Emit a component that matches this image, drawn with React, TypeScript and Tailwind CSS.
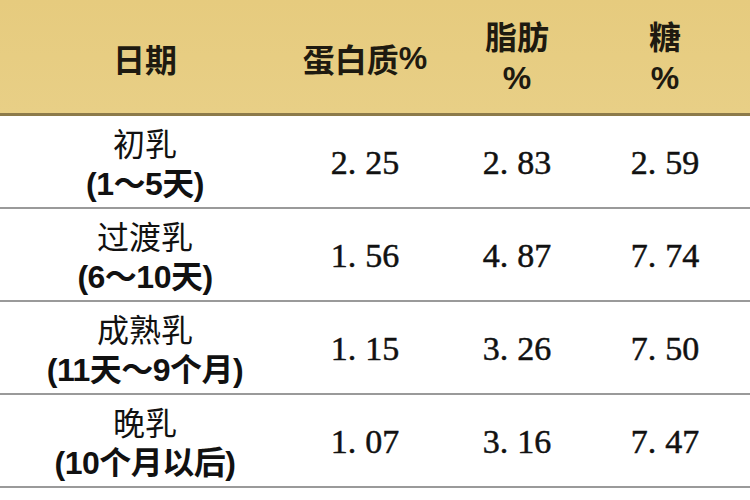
import React from "react";

const rows = [
  { a: "初乳", b: "(1～5天)", v: ["2.25", "2.83", "2.59"] },
  { a: "过渡乳", b: "(6～10天)", v: ["1.56", "4.87", "7.74"] },
  { a: "成熟乳", b: "(11天～9个月)", v: ["1.15", "3.26", "7.50"] },
  { a: "晚乳", b: "(10个月以后)", v: ["1.07", "3.16", "7.47"] },
];

const cjk = { fontFamily: '"Noto Sans CJK SC", "Noto Sans", sans-serif' };
const num = { fontFamily: '"Liberation Serif", serif' };
const bold = { fontFamily: '"Liberation Sans", "Noto Sans CJK SC", sans-serif' };

function Num({ s }: { s: string }) {
  const [i, f] = s.split(".");
  return (
    <span className="text-[34px] text-[#111] leading-none [-webkit-text-stroke:0.5px_#111]" style={num}>
      {i}
      <span className="mr-[9px]">.</span>
      {f}
    </span>
  );
}

function Pct() {
  return <span className="font-bold" style={bold}>%</span>;
}

export default function App() {
  return (
    <div className="w-[750px] h-[500px] bg-white overflow-hidden">
      <div className="grid grid-cols-[290px_150px_154px_142px_14px] h-[116px] bg-gradient-to-b from-[#e6cb7e] to-[#e8cf86] border-b-[3px] border-[#8c7a4a] text-[#1e1a10]" style={cjk}>
        <div className="flex items-center justify-center text-[32px] font-bold pt-[2px]">日期</div>
        <div className="flex items-center justify-center text-[32px] font-bold pt-[2px]">
          <span>蛋白质</span>
          <Pct />
        </div>
        <div className="flex flex-col items-center justify-center text-[32px] font-bold gap-[6px]">
          <span className="leading-[34px]">脂肪</span>
          <span className="leading-[34px]"><Pct /></span>
        </div>
        <div className="flex flex-col items-center justify-center text-[32px] font-bold gap-[6px]">
          <span className="leading-[34px]">糖</span>
          <span className="leading-[34px]"><Pct /></span>
        </div>
        <div />
      </div>
      {rows.map((r, k) => (
        <div key={k} className="grid grid-cols-[290px_150px_154px_142px_14px] h-[93px] border-b-[2px] border-[#9a9a9a]">
          <div className="flex flex-col items-center justify-center gap-[6px] pt-[2px]">
            <span className="text-[32px] leading-[36px] text-[#111]" style={cjk}>{r.a}</span>
            <span className="text-[32px] leading-[36px] font-bold text-[#111] tracking-[-0.5px]" style={bold}>{r.b}</span>
          </div>
          {r.v.map((x, j) => (
            <div key={j} className="flex items-center justify-center pt-[3px]">
              <Num s={x} />
            </div>
          ))}
          <div />
        </div>
      ))}
    </div>
  );
}
